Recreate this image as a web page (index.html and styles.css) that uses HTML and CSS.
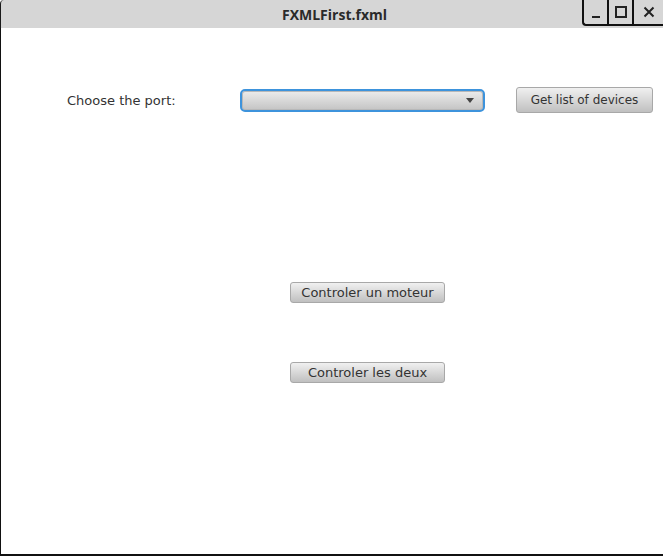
FILE: index.html
```html
<!DOCTYPE html>
<html>
<head>
<meta charset="utf-8">
<link rel="stylesheet" href="styles.css">
</head>
<body>
<div class="window">
  <div class="titlebar">
    <div class="title">FXMLFirst.fxml</div>
    <div class="controls">
      <div class="ctl ctl-min"><span class="min-bar"></span></div>
      <div class="ctl ctl-max"><span class="max-box"></span></div>
      <div class="ctl ctl-close">
        <svg width="12" height="12" viewBox="0 0 12 12"><path d="M1.5 1.5 L10.5 10.5 M10.5 1.5 L1.5 10.5" stroke="#222" stroke-width="2" fill="none"/></svg>
      </div>
    </div>
  </div>
  <div class="content">
    <div class="row-port">
      <span class="label">Choose the port:</span>
      <div class="combo"><span class="arrow"></span></div>
      <button class="btn btn-get">Get list of devices</button>
    </div>
    <div class="actions">
      <button class="btn btn-action">Controler un moteur</button>
      <button class="btn btn-action btn-second">Controler les deux</button>
    </div>
  </div>
</div>
</body>
</html>
```
FILE: styles.css
```css
html, body {
  margin: 0;
  padding: 0;
  background: #ffffff;
}
.window {
  width: 663px;
  height: 556px;
  display: flex;
  flex-direction: column;
  box-sizing: border-box;
  font-family: "DejaVu Sans", sans-serif;
}
.titlebar {
  height: 28px;
  background: #d6d6d6;
  position: relative;
  border-top-left-radius: 4px;
  border-left: 1px solid #1a1a1a;
  box-sizing: border-box;
  display: flex;
  align-items: center;
  justify-content: center;
}
.title {
  font-family: "Open Sans", sans-serif;
  font-weight: 700;
  font-size: 14px;
  color: #2a2a2a;
  margin-left: 5px;
}
.controls {
  position: absolute;
  right: 0;
  top: 0;
  height: 26px;
  display: flex;
  border-left: 2px solid #111;
  border-bottom: 2px solid #111;
  border-bottom-left-radius: 4px;
  box-sizing: border-box;
}
.ctl {
  width: 25px;
  height: 24px;
  display: flex;
  align-items: center;
  justify-content: center;
  border-right: 2px solid #111;
  box-sizing: border-box;
}
.ctl-close {
  border-right: none;
  width: 29px;
}
.min-bar {
  width: 8px;
  height: 2px;
  background: #222;
  margin-top: 9px;
}
.max-box {
  width: 8px;
  height: 8px;
  border: 2px solid #222;
}
.content {
  flex: 1;
  border-left: 1px solid #111;
  border-bottom: 2px solid #111;
  display: flex;
  flex-direction: column;
}
.row-port {
  display: flex;
  align-items: center;
  margin-top: 59px;
  height: 26px;
}
.label {
  font-size: 13px;
  color: #333;
  margin-left: 66px;
  width: 173px;
}
.combo {
  width: 245px;
  height: 23px;
  box-sizing: border-box;
  border: 2px solid #3d93dc;
  border-radius: 5px;
  background: linear-gradient(#ececec, #c4c4c4);
  box-shadow: inset 0 0 0 1px #b8b8b8;
  position: relative;
  display: flex;
  align-items: center;
  justify-content: flex-end;
}
.arrow {
  width: 0;
  height: 0;
  border-left: 4px solid transparent;
  border-right: 4px solid transparent;
  border-top: 5px solid #444;
  margin-right: 9px;
}
.btn {
  font-family: "DejaVu Sans", sans-serif;
  font-size: 13px;
  color: #333;
  background: linear-gradient(#f0f0f0, #c0c0c0);
  border: 1px solid #a8a8a8;
  border-radius: 3px;
  padding: 0;
  box-sizing: border-box;
}
.btn-get {
  margin-left: 31px;
  width: 137px;
  height: 26px;
  font-size: 12px;
}
.actions {
  display: flex;
  flex-direction: column;
  padding-left: 289px;
  margin-top: 169px;
}
.btn-action {
  width: 155px;
  height: 21px;
}
.btn-second {
  margin-top: 59px;
}
```
